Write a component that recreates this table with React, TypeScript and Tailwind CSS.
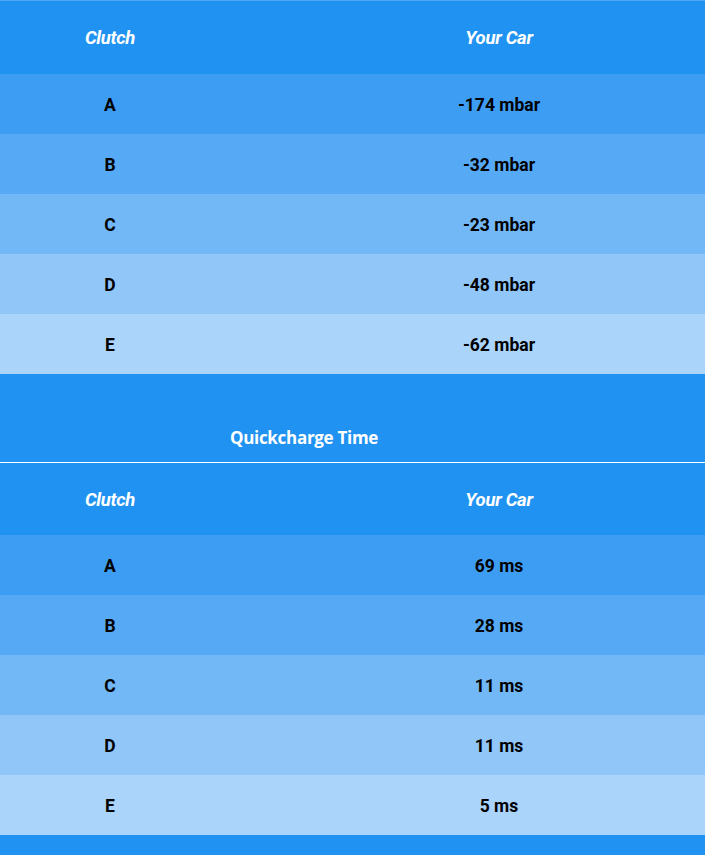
import React from "react";

type Row = { clutch: string; value: string };

const pressure: Row[] = [
  { clutch: "A", value: "-174 mbar" },
  { clutch: "B", value: "-32 mbar" },
  { clutch: "C", value: "-23 mbar" },
  { clutch: "D", value: "-48 mbar" },
  { clutch: "E", value: "-62 mbar" },
];

const quickcharge: Row[] = [
  { clutch: "A", value: "69 ms" },
  { clutch: "B", value: "28 ms" },
  { clutch: "C", value: "11 ms" },
  { clutch: "D", value: "11 ms" },
  { clutch: "E", value: "5 ms" },
];

const rowColors = [
  "bg-[#3d9df3]",
  "bg-[#56aaf5]",
  "bg-[#73b8f6]",
  "bg-[#90c6f8]",
  "bg-[#aad4fa]",
];

const ClutchTable: React.FC<{ rows: Row[]; headHeight: string }> = ({ rows, headHeight }) => (
  <div className="font-['Roboto',sans-serif]">
    <div
      className={`grid grid-cols-[220px_1fr] items-center pt-[3px] text-white text-[18.5px] font-bold italic tracking-[-0.3px] ${headHeight}`}
    >
      <div className="text-center">Clutch</div>
      <div className="text-center pl-[73px]">Your Car</div>
    </div>
    {rows.map((r, i) => (
      <div
        key={r.clutch}
        className={`grid grid-cols-[220px_1fr] h-[60px] items-center pt-[2px] text-black text-[17.5px] font-bold ${rowColors[i]}`}
      >
        <div className="text-center">{r.clutch}</div>
        <div className="text-center pl-[73px]">{r.value}</div>
      </div>
    ))}
  </div>
);

export default function App() {
  return (
    <div className="w-[705px] h-[855px] bg-[#2092f2] overflow-hidden">
      <div className="h-px bg-[#4fa8f5]" />
      <ClutchTable rows={pressure} headHeight="h-[73px]" />
      <div className="h-[88px] flex items-end justify-center pr-[97px] pb-[12px]">
        <span className="text-white font-bold text-[17px] tracking-[-0.3px] font-['Open_Sans',sans-serif]">
          Quickcharge Time
        </span>
      </div>
      <div className="h-px bg-white" />
      <ClutchTable rows={quickcharge} headHeight="h-[72px]" />
    </div>
  );
}
